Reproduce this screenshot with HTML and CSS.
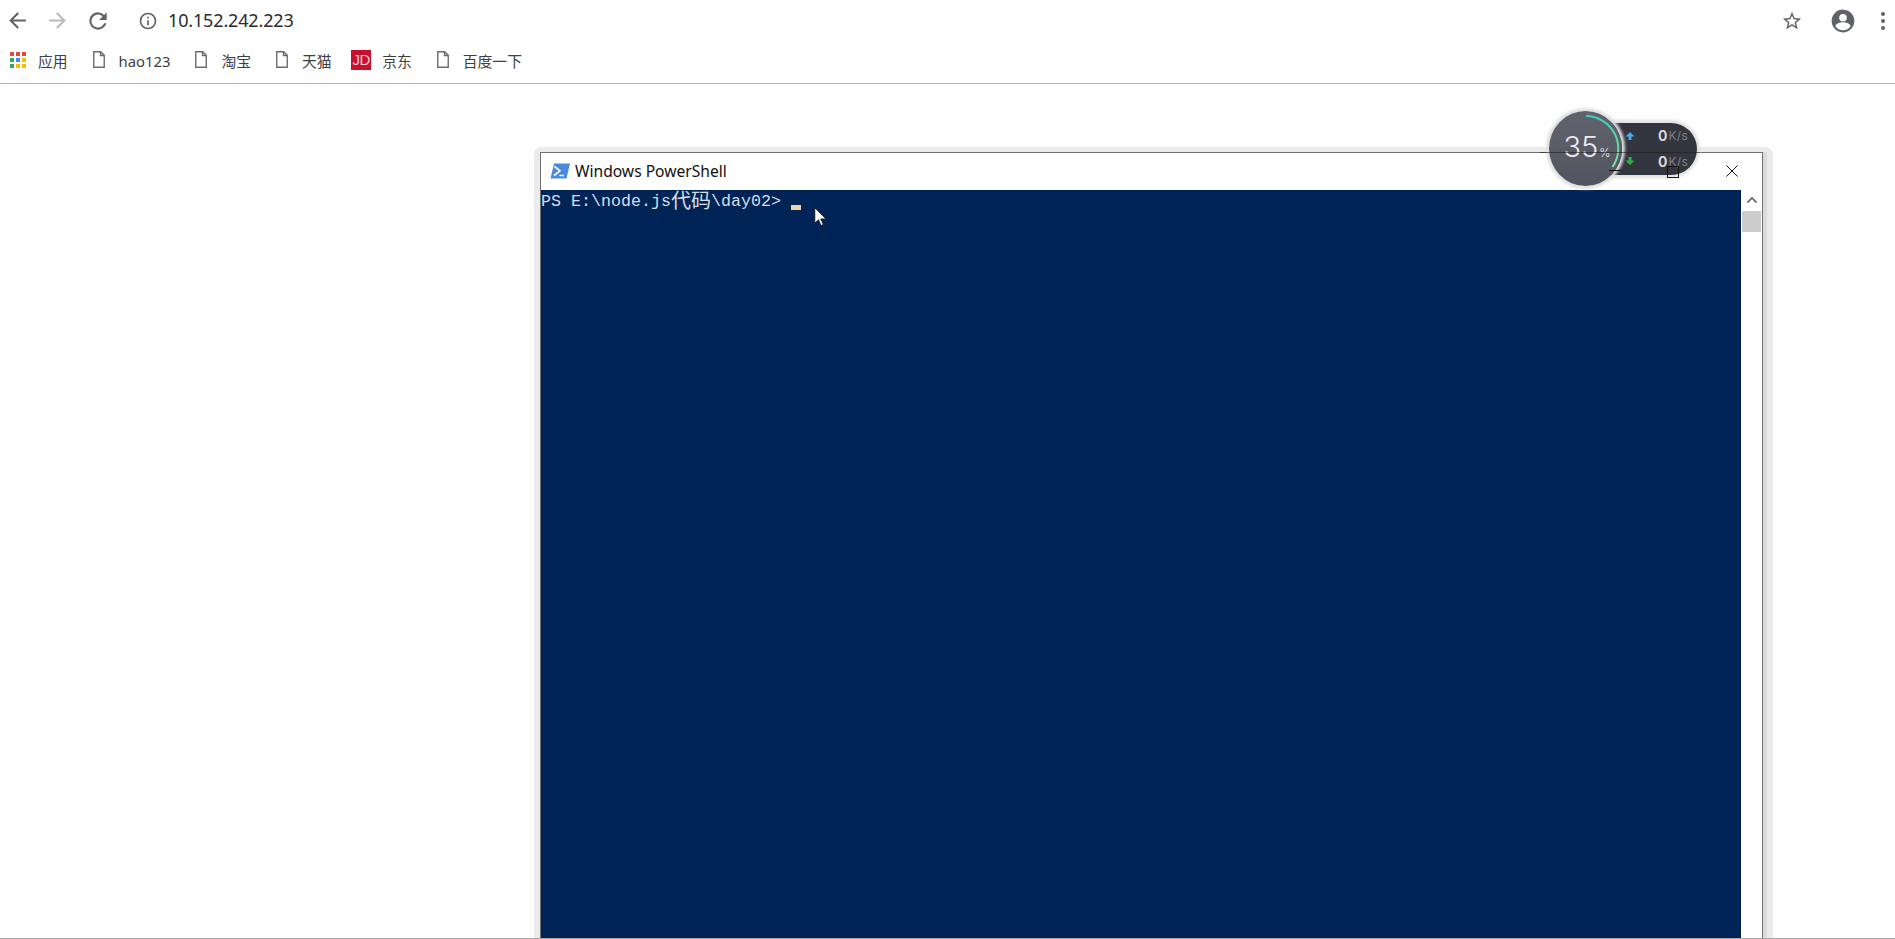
FILE: index.html
```html
<!DOCTYPE html>
<html lang="zh">
<head>
<meta charset="utf-8">
<title>Windows PowerShell</title>
<link rel="stylesheet" href="styles.css">
</head>
<body>
<div class="chrome">
  <div class="toolbar">
    <div class="nav">
      <svg class="ic back" viewBox="0 0 24 24"><path d="M20 11H7.830l5.590-5.590L12 4l-8 8 8 8 1.410-1.410L7.830 13H20z"/></svg>
      <svg class="ic fwd" viewBox="0 0 24 24"><path d="M12 4l-1.410 1.410L16.170 11H4v2h12.170l-5.580 5.590L12 20l8-8z"/></svg>
      <svg class="ic reload" viewBox="0 0 24 24"><path d="M17.650 6.350A7.960 7.960 0 0 0 12 4a8 8 0 1 0 7.730 10h-2.080A6 6 0 1 1 12 6c1.660 0 3.140.69 4.220 1.780L13 11h7V4z"/></svg>
      <svg class="ic info" viewBox="0 0 24 24"><path d="M11 7h2v2h-2zm0 4h2v6h-2zm1-9a10 10 0 1 0 0 20 10 10 0 0 0 0-20zm0 18a8 8 0 1 1 0-16 8 8 0 0 1 0 16z"/></svg>
      <span class="url">10.152.242.223</span>
    </div>
    <div class="actions">
      <svg class="ic star" viewBox="0 0 24 24"><path d="M22 9.240l-7.190-.62L12 2 9.190 8.630 2 9.240l5.460 4.730L5.820 21 12 17.270 18.180 21l-1.630-7.030L22 9.240zM12 15.400l-3.760 2.270 1-4.280-3.320-2.880 4.380-.38L12 6.100l1.710 4.040 4.380.38-3.320 2.880 1 4.280L12 15.400z"/></svg>
      <svg class="ic avatar" viewBox="0 0 24 24"><path d="M12 1.500a10.500 10.500 0 1 0 0 21 10.500 10.500 0 0 0 0-21zm0 4a3.500 3.500 0 1 1 0 7 3.500 3.500 0 0 1 0-7zm0 15a8.400 8.400 0 0 1-7-3.700c.04-2.300 4.670-3.600 7-3.600s6.960 1.300 7 3.600a8.400 8.400 0 0 1-7 3.700z"/></svg>
      <svg class="ic dots" viewBox="0 0 24 24"><circle cx="12" cy="5" r="2"/><circle cx="12" cy="12" r="2"/><circle cx="12" cy="19" r="2"/></svg>
    </div>
  </div>
  <div class="bookmarks">
    <div class="bm apps">
      <svg class="apps-ic" viewBox="0 0 16 16">
        <rect class="r" x="0" y="0" width="4" height="4"/><rect class="r" x="6" y="0" width="4" height="4"/><rect class="r" x="12" y="0" width="4" height="4"/>
        <rect class="g" x="0" y="6" width="4" height="4"/><rect class="b" x="6" y="6" width="4" height="4"/><rect class="y" x="12" y="6" width="4" height="4"/>
        <rect class="g" x="0" y="12" width="4" height="4"/><rect class="y" x="6" y="12" width="4" height="4"/><rect class="y" x="12" y="12" width="4" height="4"/>
      </svg>
      <span class="label">应用</span>
    </div>
    <div class="bm"><svg class="page" viewBox="0 0 12 17"><path d="M.75.75h7l3.500 3.500v12h-10.500z M7.500.75v3.750h3.750"/></svg><span class="label">hao123</span></div>
    <div class="bm"><svg class="page" viewBox="0 0 12 17"><path d="M.75.75h7l3.500 3.500v12h-10.500z M7.500.75v3.750h3.750"/></svg><span class="label">淘宝</span></div>
    <div class="bm tm"><svg class="page" viewBox="0 0 12 17"><path d="M.75.75h7l3.500 3.500v12h-10.500z M7.500.75v3.750h3.750"/></svg><span class="label">天猫</span></div>
    <div class="bm"><span class="jd">JD</span><span class="label">京东</span></div>
    <div class="bm"><svg class="page" viewBox="0 0 12 17"><path d="M.75.75h7l3.500 3.500v12h-10.500z M7.500.75v3.750h3.750"/></svg><span class="label">百度一下</span></div>
  </div>
</div>

<div class="window">
  <div class="titlebar">
    <svg class="ps-ic" viewBox="0 0 20 16"><path class="ps-bg" d="M4 .5h16l-3.500 15H.5z"/><path class="ps-fg" d="M4.500 3.500l5.500 4.300L4 12.500M9.500 12.500h4.500"/></svg>
    <span class="title">Windows PowerShell</span>
    <svg class="close" viewBox="0 0 12 12"><path d="M.5.5l11 11M11.500.5l-11 11"/></svg>
  </div>
  <div class="body">
    <div class="term">PS E:\node.js<span class="cjk">代</span><span class="cjk">码</span>\day02&gt;<span class="caret"></span></div>
    <div class="scrollbar">
      <svg class="up" viewBox="0 0 10 6"><path d="M.5 5.500L5 1l4.500 4.500"/></svg>
      <div class="thumb"></div>
    </div>
  </div>
</div>

<svg class="pointer" viewBox="0 0 12 19"><path d="M.8.8v15.400l3.700-3.500 2.500 5.800 2.300-1-2.500-5.600h5.200z"/></svg>

<div class="widget">
  <div class="speeds">
    <div class="speed"><svg class="arrow up-a" viewBox="0 0 10 10"><path d="M5 1l4.500 4.500H6.500V9h-3V5.500H.5z"/></svg><b>0</b><span>K/s</span></div>
    <div class="speed"><svg class="arrow down-a" viewBox="0 0 10 10"><path d="M5 9L.5 4.500h3V1h3v3.500h3z"/></svg><b>0</b><span>K/s</span></div>
  </div>
  <div class="gauge">
    <svg class="ring" viewBox="0 0 73 75">
      <defs><linearGradient id="ringGrad" x1="0" y1="0" x2="0" y2="1"><stop offset="0" stop-color="#3ecdb6"/><stop offset="1" stop-color="#7fe39b"/></linearGradient></defs>
      <path stroke="url(#ringGrad)" d="M37 5A32.500 32.500 0 0 1 63.500 56"/>
    </svg>
    <span class="pct">35</span><span class="unit">%</span>
  </div>
</div>

<div class="caption">
  <div class="edge"></div>
  <div class="min"></div>
  <div class="max"></div>
</div>
</body>
</html>
```
FILE: styles.css
```css
* { box-sizing: border-box; }
html { margin: 0; height: 100%; overflow: hidden; }
body {
  margin: 0;
  position: relative;
  height: 939px;
  overflow: hidden;
  background: #fefefe;
  font-family: "Noto Sans", "Noto Sans CJK SC", sans-serif;
  color: #3c4043;
  border-bottom: 1px solid #a8a8a8;
}
.chrome { height: 84px; background: #fff; border-bottom: 1px solid #b4b4b4; }
.toolbar { height: 41px; display: flex; justify-content: space-between; align-items: center; padding: 0 0 0 5px; }
.nav { display: flex; align-items: center; }
.ic { fill: #5f6368; display: block; }
.back { width: 25px; height: 25px; }
.fwd { width: 25px; height: 25px; margin-left: 15px; fill: #b8babc; }
.reload { width: 26px; height: 26px; margin-left: 15px; }
.info { width: 20px; height: 20px; margin-left: 27px; }
.url { margin: 0 0 2px 10px; font-size: 18px; color: #2a2b2e; letter-spacing: -0.150px; }
.actions { display: flex; align-items: center; }
.star { margin-right: 27px; width: 22px; height: 22px; }
.avatar { margin-right: 15px; width: 26px; height: 26px; }
.dots { width: 24px; height: 24px; }
.bookmarks { height: 42px; display: flex; align-items: center; gap: 25px; padding: 0 0 5px 10px; font-size: 14.800px; }
.bm { display: flex; align-items: center; }
.label { padding-top: 2px; }
.apps-ic { width: 16px; height: 16px; margin-right: 12px; display: block; }
.page { fill: none; stroke: #6a6d71; stroke-width: 1.400; width: 12px; height: 17px; margin-right: 14px; display: block; }
.tm { margin-right: -5.500px; }
.r { fill: #e8453c; }
.g { fill: #34a853; }
.b { fill: #4285f4; }
.y { fill: #fbbc05; }
.jd { width: 20px; height: 20px; margin: 1px 11px 0 0; background: #c8102e; color: #f3c9cf; font: 400 15px/20px "Liberation Sans", sans-serif; text-align: center; letter-spacing: -0.500px; }

.window {
  position: absolute;
  left: 540px;
  top: 152px;
  width: 1223px;
  height: 800px;
  background: #fff;
  border: 1px solid #707070;
  box-shadow: 4px 0 0 #dcdcdc;
}
.window::before {
  content: "";
  position: absolute;
  left: -7px;
  right: -11px;
  top: -6px;
  bottom: -1px;
  background: #ebebeb;
  border-radius: 8px 8px 0 0;
  z-index: -1;
}
.titlebar { height: 37px; display: flex; align-items: center; padding: 0 0 2px 9px; position: relative; }
.ps-ic { width: 20px; height: 16px; margin-right: 5px; }
.ps-bg { fill: #4a8ade; }
.ps-fg { fill: none; stroke: #fff; stroke-width: 1.600; }
.title { font-size: 15.600px; color: #111; }
.close { position: absolute; right: 24px; top: 12px; width: 12px; height: 12px; fill: none; stroke: #111; stroke-width: 1; }
.body { display: flex; height: 762px; }
.term {
  width: 1200px;
  background: #012456;
  color: #d5dde8;
  font: 16.670px/20px "Liberation Mono", monospace;
  padding-top: 2px;
  white-space: pre;
  position: relative;
}
.cjk { display: inline-block; width: 20px; font: 400 20px/16px "Noto Sans CJK SC", sans-serif; vertical-align: top; }
.caret { position: absolute; left: 250px; top: 15px; width: 10px; height: 5px; background: #f3d3a4; }
.scrollbar { width: 21px; display: flex; flex-direction: column; align-items: center; padding-top: 7px; }
.up { width: 10px; height: 6px; fill: none; stroke: #606060; stroke-width: 1.600; }
.thumb { width: 19px; height: 21px; background: #cdcdcd; margin-top: 8px; }

.pointer { position: absolute; left: 814px; top: 207px; width: 12px; height: 19px; fill: #fff; stroke: #111; stroke-width: 0.800; }

.widget { position: absolute; left: 1549px; top: 111px; width: 148px; height: 75px; }
.speeds {
  position: absolute; left: 37px; top: 12px; width: 111px; height: 52px;
  background: #33353f; border-radius: 26px; box-shadow: 0 0 3px 3px #e2e2e2;
  padding: 0 0 1px 39px;
  display: flex; flex-direction: column; justify-content: center;
}
.speed { display: flex; align-items: center; height: 26.500px; font-family: "Inter", sans-serif; }
.arrow { width: 10px; height: 10px; margin-right: 23px; flex: none; }
.up-a { fill: #4aa8e8; }
.down-a { fill: #2fae4a; }
.speed b { color: #d4d5d9; font-size: 14px; font-weight: 700; }
.speed span { color: #7f8189; font-size: 12px; margin-left: 1px; letter-spacing: 0.300px; }
.gauge {
  position: absolute; left: 0; top: 0; width: 73px; height: 75px;
  background: linear-gradient(#60626d, #525460);
  border-radius: 50%; box-shadow: 0 0 3px 3px #e0e0e0;
  display: flex; align-items: baseline; justify-content: center; padding: 19px 0 0 3px;
  font-family: "Inter", sans-serif; color: #ececee;
}
.ring { position: absolute; left: 0; top: 0; width: 73px; height: 75px; fill: none; stroke-width: 2; }
.pct { font-size: 29px; font-weight: 300; line-height: 34px; }
.unit { font-size: 12px; font-weight: 300; margin-left: 1px; }

.caption { position: absolute; left: 1540px; top: 152px; width: 160px; height: 30px; }
.edge { height: 1px; background: rgba(30, 30, 30, 0.6); }
.min { position: absolute; left: 69px; top: 18px; width: 12px; height: 1px; background: #111; }
.max { position: absolute; left: 127px; top: 14px; width: 12px; height: 12px; border: 1px solid #111; }
```
